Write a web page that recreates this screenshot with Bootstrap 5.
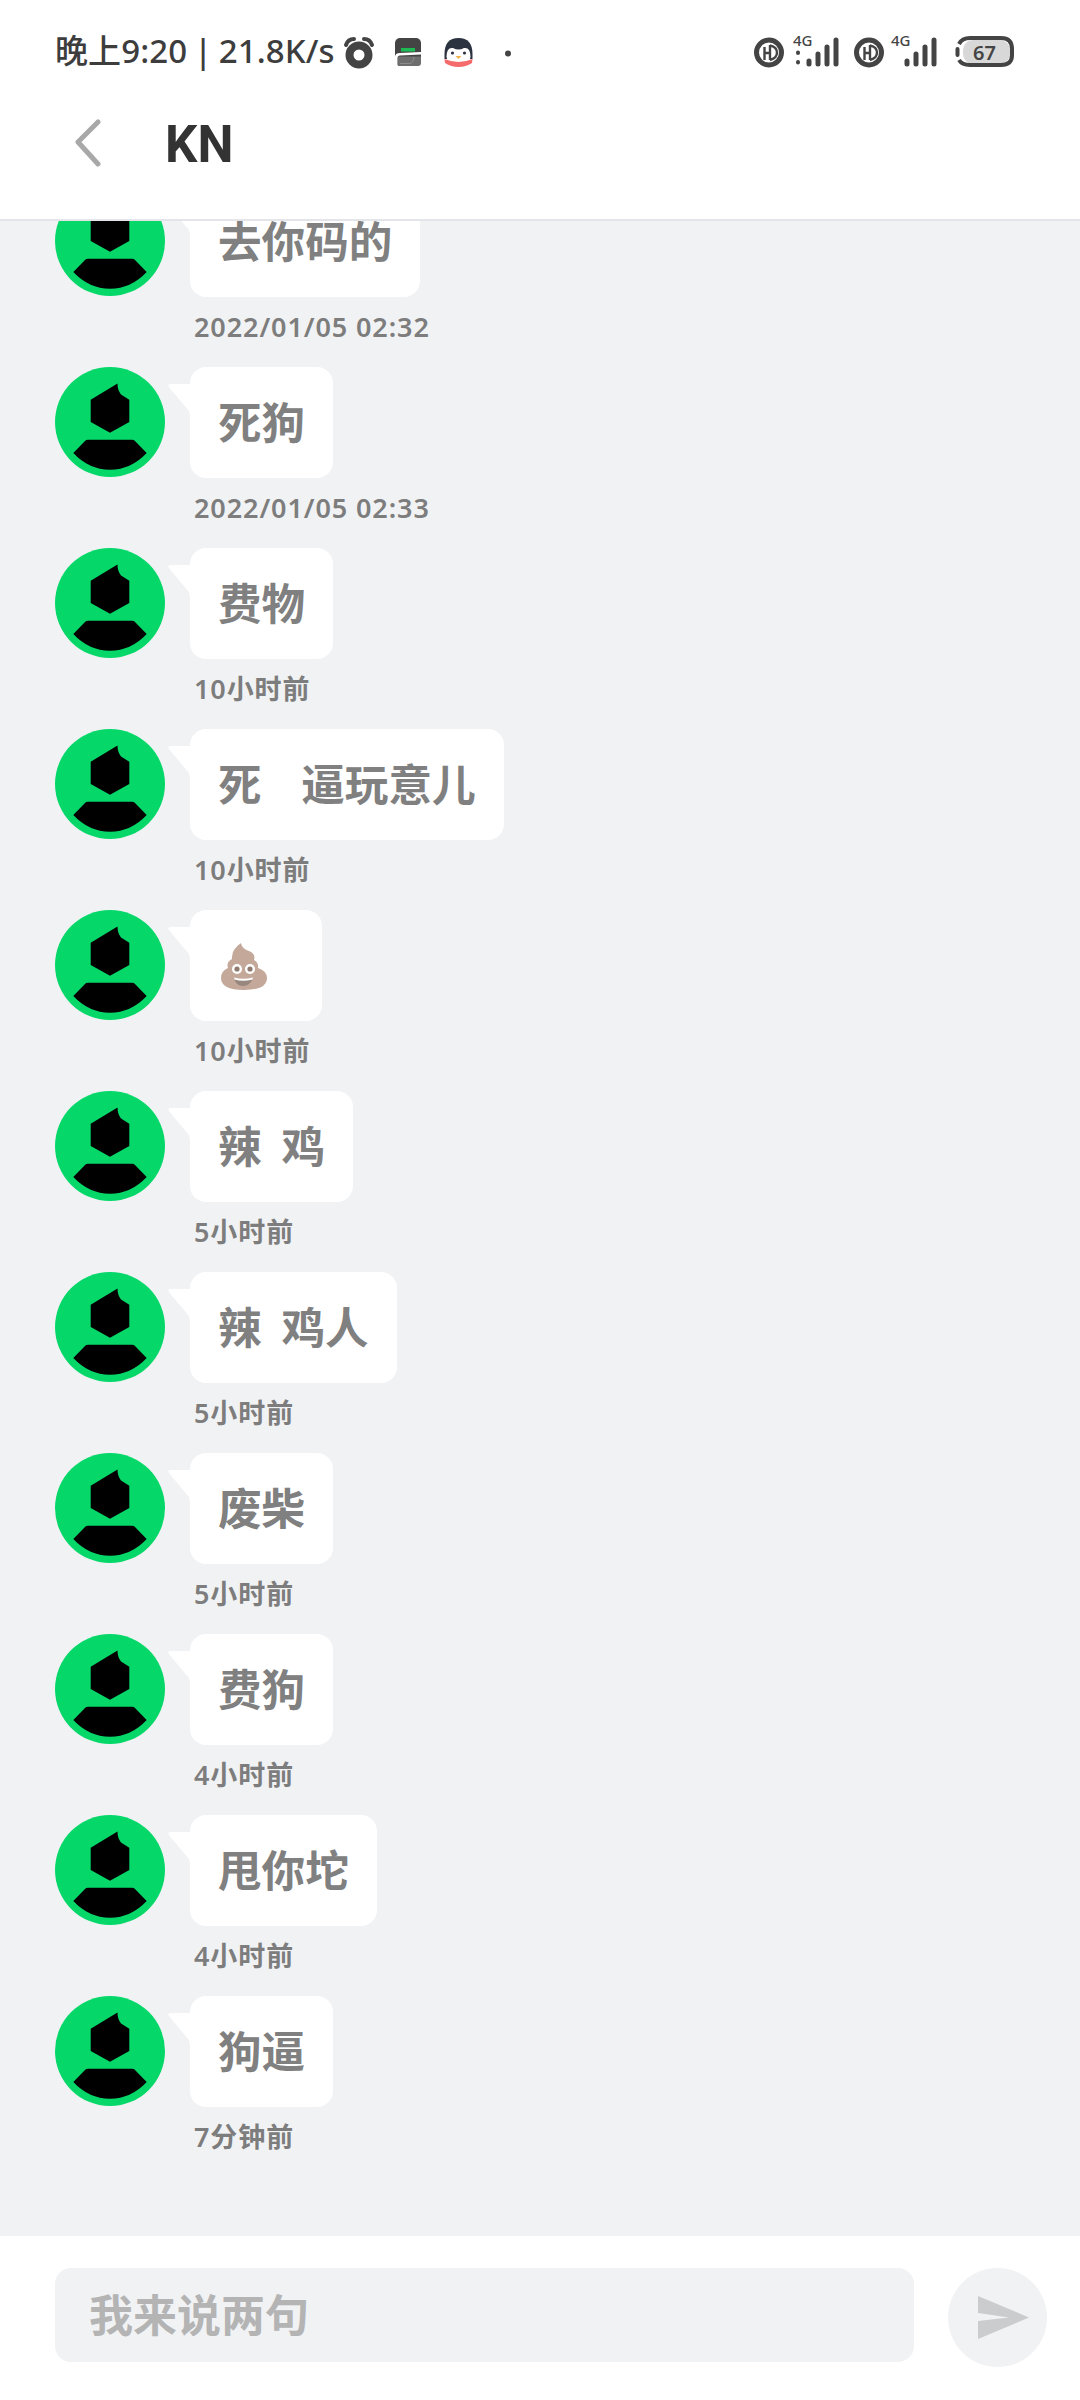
<!DOCTYPE html>
<html>
<head>
<meta charset="utf-8">
<meta name="viewport" content="width=device-width, initial-scale=1">
<link href="https://cdn.jsdelivr.net/npm/bootstrap@5.3.2/dist/css/bootstrap.min.css" rel="stylesheet">
<script src="https://cdn.jsdelivr.net/npm/bootstrap@5.3.2/dist/js/bootstrap.bundle.min.js"></script>
<style>
 body{
  font-family:"Noto Sans","Noto Sans CJK SC",sans-serif;
  background:#f1f2f4;
 }
 .app-page{height:2400px;}
 .top-area{height:221px;background:#fff;border-bottom:2px solid #e4e5e8;position:relative;z-index:2;}
 .status-row{height:90px;padding:28px 56px 0 55px;}
 .status-text{font-size:33px;font-weight:500;color:#3d3d3d;white-space:nowrap;line-height:46px;word-spacing:-2px;letter-spacing:.1px;}
 .title-row{height:108px;padding-left:73px;}
 .title-text{font-family:Roboto,sans-serif;font-size:51px;font-weight:700;color:#333;line-height:1;margin-left:62px;}
 .chat-list{margin-top:-35px;}
 .msg-row{height:181px;padding-left:55px;}
 .user-pic{width:110px;height:110px;flex:none;}
 .msg-col{margin-left:25px;}
 .msg-bubble{position:relative;background:#fff;border-radius:16px;padding:0 28px;height:111px;font-size:43.6px;font-weight:700;color:#808080;line-height:111px;white-space:pre;word-spacing:8.5px;}
 .msg-tail{position:absolute;left:-22px;top:17px;width:23px;height:36px;}
 .msg-time{font-size:27px;font-weight:600;color:#7d7d7d;line-height:36px;margin:12px 0 0 4px;letter-spacing:.9px;}
 .emoji-box{width:132px;padding-left:31px;}
 .emoji-pic{width:46px;height:47px;margin-top:33px;display:block;}
 .foot-bar{height:164px;background:#fff;padding:32px 33px 0 55px;flex:none;}
 .say-input{width:860px;height:94px;background:#f1f2f4;border:0;border-radius:16px;font-size:44px;font-weight:700;padding:0 34px;}
 .say-input::placeholder{color:#b4b4b4;opacity:1;}
 .send-btn{width:99px;height:99px;background:#f1f2f4;border:0;padding:0 0 0 11px;margin-left:34px;}
</style>
</head>
<body>
<div class="app-page d-flex flex-column">
  <div class="top-area flex-shrink-0">
    <div class="status-row d-flex align-items-start justify-content-between">
      <div class="d-flex align-items-center">
        <span class="status-text">晚上9:20 | 21.8K/s</span>
        <svg width="170" height="46" viewBox="0 0 170 46" class="ms-2">
          <circle cx="16" cy="27" r="9.5" fill="none" stroke="#444" stroke-width="8"/>
          <path d="M3 17 Q5 11 11 11 M29 17 Q27 11 21 11" fill="none" stroke="#444" stroke-width="4" stroke-linecap="round"/>
          <rect x="52" y="10" width="26" height="28" rx="5" fill="#444"/>
          <rect x="58" y="20" width="14" height="3.5" fill="#1db954"/>
          <path d="M52 29 Q52 25 57 25 L78 24 L78 26.5 L57 27.5 Q54.5 27.5 54.5 30 L54.5 38 L52 38Z" fill="#fff"/>
          <path d="M55 28.5 H78 V35 Q78 38 75 38 H55Z" fill="#6e6e6e"/>
          <path d="M57 35.5 H67 Q70 35.5 71 29" fill="none" stroke="#8c8c8c" stroke-width="1"/>
          <path d="M115.5 10 Q129.5 10 129.5 26 V31 H101.5 V26 Q101.5 10 115.5 10Z" fill="#2c3340"/>
          <path d="M103.5 29 Q103.5 19 110 20 Q115.5 23 121 20 Q127.5 19 127.5 29 Q127.5 34 115.5 34 Q103.5 34 103.5 29Z" fill="#fff"/>
          <path d="M101.5 31 Q115.5 37 129.5 31 L129 35 Q123 39 115.5 39 Q108 39 102 35Z" fill="#f56a6a"/>
          <circle cx="109.5" cy="25" r="1.6" fill="#2c3340"/><circle cx="121.5" cy="25" r="1.6" fill="#2c3340"/>
          <path d="M112.5 28 H118.5 L115.5 31Z" fill="#f4b24a"/>
          <circle cx="165" cy="25.5" r="3" fill="#444"/>
        </svg>
      </div>
      <svg width="270" height="46" viewBox="754 28 270 46">
        <g id="hdOne" fill="none" stroke="#444">
          <circle cx="769" cy="52.5" r="12.5" stroke-width="5"/>
          <path d="M764.5 47 V60 M764.5 53 H770 M770 45 V60 M770 45.5 Q777 47 777 52.5 Q777 58 770 60" stroke-width="2.4"/>
        </g>
        <use href="#hdOne" x="100"/>
        <text x="793" y="46" font-size="15" font-weight="500" fill="#444">4G</text>
        <text x="891" y="46" font-size="15" font-weight="500" fill="#444">4G</text>
        <g stroke="#444" stroke-width="5" stroke-linecap="round">
          <path d="M798 52.5 V53 M798 62 V62.5" stroke-width="4"/>
          <path d="M809 61 V64 M818 54 V64 M827 47 V64 M836 40 V64"/>
          <path d="M907 61 V64 M916 54 V64 M925 47 V64 M934 40 V64"/>
        </g>
        <rect x="963" y="40" width="47" height="24" rx="10" fill="#d8d8d8"/>
        <path d="M959 44 Q962 38 970 38 H1001 Q1012 38 1012 49 V55 Q1012 65 1001 65 H970 Q962 65 959 60" fill="none" stroke="#444" stroke-width="4"/>
        <path d="M957.5 49 V55" stroke="#444" stroke-width="4" stroke-linecap="round"/>
        <text x="973" y="60" font-size="20" font-weight="600" fill="#444">67</text>
      </svg>
    </div>
    <div class="title-row d-flex align-items-center">
      <svg width="30" height="50" viewBox="0 0 30 50"><path d="M25 3 L5 23 L25 45" fill="none" stroke="#a8a8a8" stroke-width="5" stroke-linecap="round" stroke-linejoin="round"/></svg>
      <span class="title-text">KN</span>
    </div>
  </div>

  <div class="flex-grow-1 overflow-hidden">
    <div class="chat-list" id="chatList"></div>
  </div>

  <div class="foot-bar d-flex align-items-start">
    <input class="say-input" type="text" placeholder="我来说两句">
    <button class="send-btn btn rounded-circle d-flex align-items-center justify-content-center">
      <svg width="51" height="43" viewBox="0 0 51 43"><path d="M0 0 L51 21.5 L0 43 V25 L31 21.5 L0 17Z" fill="#cbcccd"/></svg>
    </button>
  </div>
</div>
<script>
  var msgs=[
    ["去你码的","2022/01/05 02:32"],
    ["死狗","2022/01/05 02:33"],
    ["费物","10小时前"],
    ["死  逼玩意儿","10小时前"],
    ["@poop","10小时前"],
    ["辣 鸡","5小时前"],
    ["辣 鸡人","5小时前"],
    ["废柴","5小时前"],
    ["费狗","4小时前"],
    ["甩你坨","4小时前"],
    ["狗逼","7分钟前"]
  ];
  var pic='<svg class="user-pic" viewBox="0 0 110 110"><circle cx="55" cy="55" r="55" fill="#05d869"/>'+
    '<path d="M62.5 16.5 Q62.5 23 66 27.5 L74.3 32.7 V55 L55 65.7 L35.7 55 V32.7Z" fill="#000"/>'+
    '<path d="M33 72.7 H77 Q79 72.7 80 74 L91.7 86 Q76 102.7 55 102.7 Q34 102.7 18.3 86 L30 74 Q31 72.7 33 72.7Z" fill="#000"/></svg>';
  var tail='<svg class="msg-tail" viewBox="0 0 23 36"><path d="M23 0 H3 Q-1 0 1 3 Q5 8 21 27 L23 36Z" fill="#fff"/></svg>';
  var poop='<svg class="emoji-pic" viewBox="0 0 46 47"><path d="M20 0 Q21 6 28 8 Q35 11 33 17 Q38 20 37 25 Q46 28 46 35 Q46 47 23 47 Q0 47 0 35 Q0 28 7 25 Q5 19 11 16 Q10 7 20 0Z" fill="#c4a99b"/>'+
    '<circle cx="16" cy="26" r="5" fill="#fff"/><circle cx="29" cy="26" r="5" fill="#fff"/><circle cx="16" cy="26" r="2.6" fill="#8f7a6f"/><circle cx="29" cy="26" r="2.6" fill="#8f7a6f"/>'+
    '<path d="M13 35 Q22 38 32 35 Q29 43 22 43 Q15 43 13 35Z" fill="#97877e"/><path d="M13 34.5 Q22 37 32 34.5 L31.5 36.5 Q22 39 13.5 36.5Z" fill="#fff"/></svg>';
  var html="";
  for(var i=0;i<msgs.length;i++)
  {
    var isPoop=msgs[i][0]=="@poop";
    html+="<div class='msg-row d-flex align-items-start'>"+pic+
      "<div class='msg-col d-flex flex-column align-items-start'>"+
      "<div class='msg-bubble"+(isPoop?" emoji-box":"")+"'>"+tail+(isPoop?poop:msgs[i][0])+"</div>"+
      "<div class='msg-time'>"+msgs[i][1]+"</div></div></div>";
  }
  document.getElementById("chatList").innerHTML=html;
</script>
</body>
</html>
